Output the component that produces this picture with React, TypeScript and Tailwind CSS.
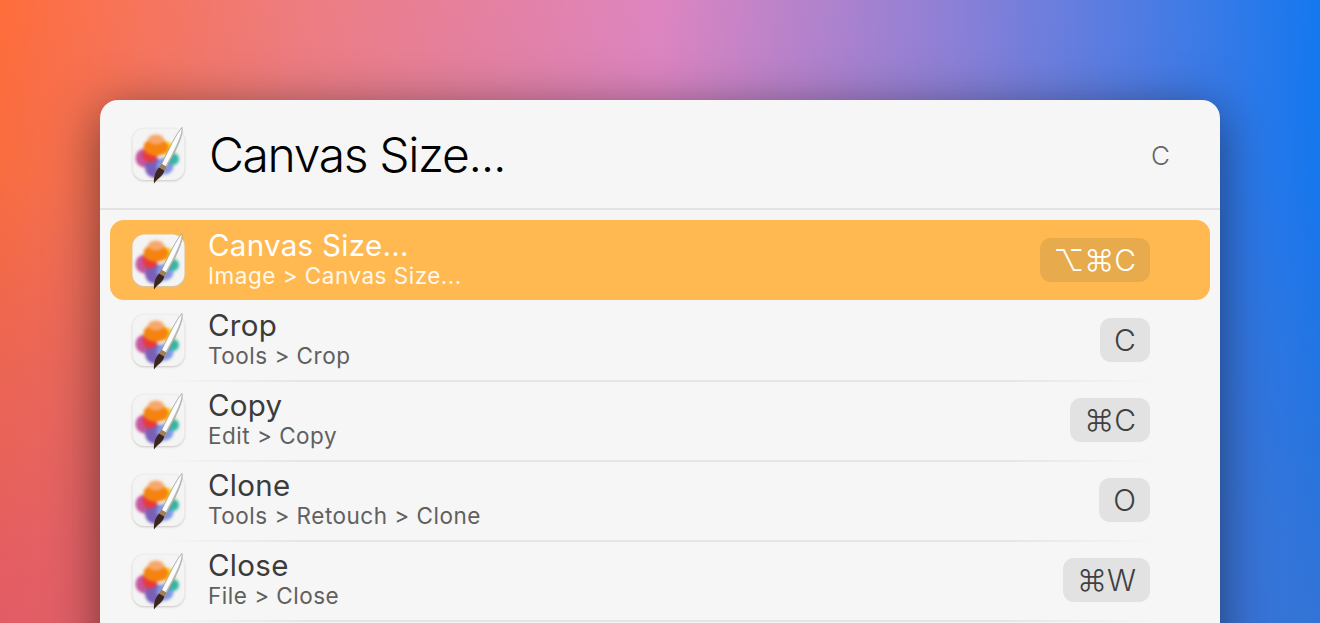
const font = "font-['Inter','Liberation_Sans',sans-serif]";

const rows = [
  { title: 'Canvas Size...', path: 'Image > Canvas Size...', keys: '⌥⌘C', active: true },
  { title: 'Crop', path: 'Tools > Crop', keys: 'C' },
  { title: 'Copy', path: 'Edit > Copy', keys: '⌘C' },
  { title: 'Clone', path: 'Tools > Retouch > Clone', keys: 'O' },
  { title: 'Close', path: 'File > Close', keys: '⌘W' },
];

// Pixelmator style app icon
const AppIcon = () => (
  <div className="relative h-[53px] w-[53px] shrink-0">
    <svg viewBox="0 0 53 53" width="53" height="53" className="overflow-visible">
      <rect x="0.5" y="1" width="52" height="52" rx="12" fill="#c9c7c4" className="blur-[1px]" />
      <rect x="0.5" y="0.5" width="52" height="51.5" rx="12" fill="#f4f4f4" />
      <g className="blur-[1.4px]">
        <circle cx="13" cy="30" r="9.5" fill="#c4559f" />
        <circle cx="23" cy="40" r="10" fill="#7a5fb8" />
        <circle cx="33" cy="38" r="8.5" fill="#8496de" />
        <circle cx="41" cy="31" r="6" fill="#35b5a5" />
        <circle cx="36" cy="21" r="7" fill="#f9d41c" />
        <circle cx="18" cy="27" r="7.5" fill="#e83a3c" />
        <ellipse cx="24" cy="19" rx="12.5" ry="9" fill="#f5830f" />
        <ellipse cx="24" cy="11.5" rx="8" ry="5" fill="#f6a86a" />
      </g>
      <path d="M50 -0.5 C51.5 6 45.5 20 34.5 39 L29.5 36.3 C37 21 44 6 50 -0.5 Z" fill="#fbfbfb" stroke="#8f8f8f" strokeWidth="0.7" />
      <path d="M49.6 1.5 C49.5 7 43.5 21 33.2 38.4 L34.5 39 C45.5 20 51 6 49.6 1.5 Z" fill="#b5b5b5" />
      <path d="M29.3 35.8 L34.6 38.8 L32.2 43 L27 40 Z" fill="#a08058" />
      <path d="M27 39.6 L32.2 42.6 C31.8 47.5 26 50 22 55.5 C21.5 50 23 44 27 39.6 Z" fill="#3a261f" />
    </svg>
  </div>
);

const Row = ({ title, path, keys, active }: { title: string; path: string; keys: string; active?: boolean }) => (
  <div className="relative h-[80px]">
    <div className={`mx-[10px] flex h-[80px] items-center rounded-[14px] pl-[22px] pr-[60px] ${active ? 'bg-[#ffb950]' : ''}`}>
      <AppIcon />
      <div className="ml-[23px] flex min-w-0 flex-1 flex-col pt-[2px]">
        <div className={`mt-[-3px] text-[29.5px] leading-[32px] tracking-[0.3px] ${active ? 'text-white' : 'text-[#3b3b3b]'}`}>{title}</div>
        <div className={`mt-[1px] text-[22.5px] leading-[28px] tracking-[0.5px] ${active ? 'text-[#fff8ec]' : 'text-[#606060]'}`}>{path}</div>
      </div>
      <div className={`flex h-[44px] min-w-[50px] items-center justify-center rounded-[11px] px-[14px] text-[30px] font-light ${active ? 'bg-[#e7ab4d] text-white' : 'bg-[#e2e2e2] text-[#404040]'}`}>
        {keys}
      </div>
    </div>
    {!active && (
      <div className="absolute bottom-[-2px] left-[60px] right-[60px] h-[2px] bg-[linear-gradient(90deg,#f6f6f6_0%,#e6e6e6_14%,#e6e6e6_85%,#f6f6f6_100%)]" />
    )}
  </div>
);

export default function App() {
  return (
    <div className={`relative h-[623px] w-[1320px] overflow-hidden bg-[radial-gradient(ellipse_350px_450px_at_0%_100%,rgba(224,84,115,0.65)_0%,rgba(224,84,115,0)_100%),radial-gradient(ellipse_300px_450px_at_100%_100%,rgba(80,115,190,0.45)_0%,rgba(80,115,190,0)_100%),linear-gradient(180deg,rgba(60,90,200,0)_0%,rgba(60,90,200,0.12)_100%),linear-gradient(90deg,#ff6d3b_0%,#ee7c7e_22%,#dd85c0_50%,#8d80d6_72%,#1478ef_100%)] pt-[100px] ${font}`}>
      <div className="mx-[100px] h-[600px] rounded-t-[18px] bg-[#f6f6f6] shadow-[0_10px_50px_rgba(0,0,0,0.5)]">
        <div className="flex h-[110px] items-center border-b-2 border-[#e3e3e3] pl-[32px] pr-[50px]">
          <AppIcon />
          <div className="ml-[24px] mt-[2px] flex-1 text-[48px] font-light leading-none tracking-[-1.35px] text-black">Canvas Size...</div>
          <div className="mt-[2px] text-[26px] font-light text-[#666666]">C</div>
        </div>
        <div className="pt-[10px]">
          {rows.map((r) => (
            <Row key={r.title} {...r} />
          ))}
        </div>
      </div>
    </div>
  );
}
